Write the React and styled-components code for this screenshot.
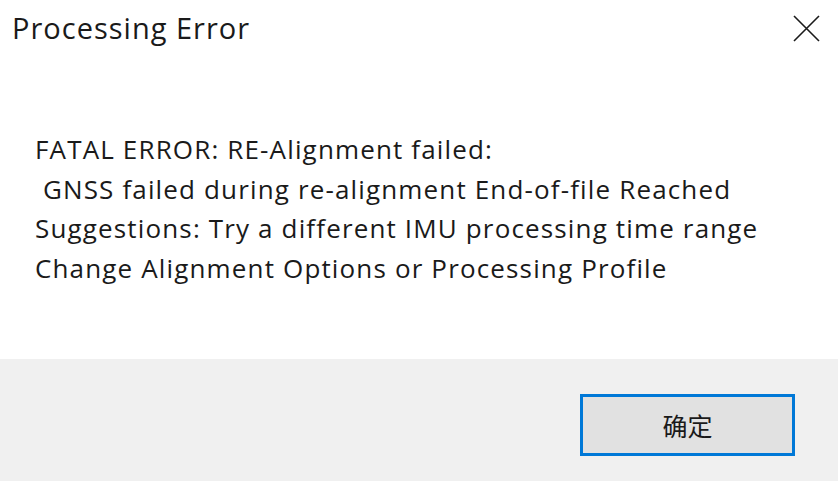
import React from "react";
import styled, { createGlobalStyle } from "styled-components";

const GlobalStyle = createGlobalStyle`
  html, body {
    margin: 0;
    padding: 0;
    background: #ffffff;
  }
  body {
    font-family: "Open Sans", "Noto Sans", "Noto Sans CJK SC", sans-serif;
  }
`;

const messageLines = [
  "FATAL ERROR: RE-Alignment failed:",
  "\u00a0GNSS failed during re-alignment End-of-file Reached",
  "Suggestions: Try a different IMU processing time range",
  "Change Alignment Options or Processing Profile",
];

function App() {
  return (
    <>
      <GlobalStyle />
      <Dialog>
        <TitleBar>
          <Title>Processing Error</Title>
          <CloseButton aria-label="close">
            <svg width="27" height="27" viewBox="0 0 27 27">
              <path d="M1 1 L26 26 M26 1 L1 26" stroke="#1a1a1a" strokeWidth="1.6" fill="none" />
            </svg>
          </CloseButton>
        </TitleBar>
        <Body>
          {messageLines.map((line, i) => (
            <Line key={i}>{line}</Line>
          ))}
        </Body>
        <Footer>
          <OkButton>确定</OkButton>
        </Footer>
      </Dialog>
    </>
  );
}

export default App;

const Dialog = styled.div`
  width: 838px;
  height: 481px;
  display: flex;
  flex-direction: column;
  background: #ffffff;
`;

const TitleBar = styled.div`
  height: 56px;
  display: flex;
  align-items: center;
  justify-content: space-between;
  padding: 0 18px 0 12px;
`;

const Title = styled.div`
  font-size: 29px;
  letter-spacing: 1px;
  color: #1a1a1a;
  margin-top: -2px;
`;

const CloseButton = styled.div`
  width: 27px;
  height: 27px;
  display: flex;
  margin-top: 1px;
`;

const Body = styled.div`
  flex: 1;
  padding: 74px 0 0 35px;
  display: flex;
  flex-direction: column;
`;

const Line = styled.div`
  font-size: 26px;
  letter-spacing: 1.15px;
  line-height: 39.5px;
  color: #1a1a1a;
  white-space: pre;
`;

const Footer = styled.div`
  height: 122px;
  background: #f0f0f0;
  display: flex;
  align-items: center;
  justify-content: flex-end;
  padding-right: 43px;
`;

const OkButton = styled.button`
  width: 215px;
  height: 62px;
  margin-top: 10px;
  background: #e1e1e1;
  border: 3px solid #0078d7;
  font-family: "Noto Sans CJK SC", sans-serif;
  font-size: 25px;
  color: #1a1a1a;
  padding: 0;
`;
